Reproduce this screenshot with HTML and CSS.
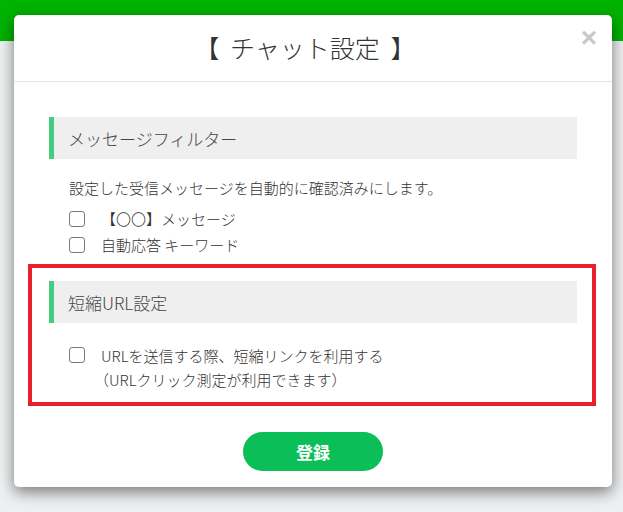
FILE: index.html
```html
<!DOCTYPE html>
<html lang="ja">
<head>
<meta charset="utf-8">
<title>チャット設定</title>
<link rel="stylesheet" href="styles.css">
</head>
<body>
<div class="page">
  <div class="topbar"></div>
</div>
<div class="modal">
  <div class="modal-header">
    <h1 class="modal-title">【 チャット設定 】</h1>
    <button class="close" type="button">×</button>
  </div>
  <div class="modal-body">
    <section class="section">
      <h2 class="section-title">メッセージフィルター</h2>
      <div class="section-content">
        <p class="desc">設定した受信メッセージを自動的に確認済みにします。</p>
        <ul class="checks">
          <li class="check-row"><input type="checkbox" class="cb"><span class="label">【〇〇】メッセージ</span></li>
          <li class="check-row"><input type="checkbox" class="cb"><span class="label">自動応答 キーワード</span></li>
        </ul>
      </div>
    </section>
    <section class="section highlight">
      <h2 class="section-title">短縮URL設定</h2>
      <div class="section-content url-content">
        <div class="check-row multi">
          <input type="checkbox" class="cb">
          <span class="label">URLを送信する際、短縮リンクを利用する<br><span class="note">（URLクリック測定が利用できます）</span></span>
        </div>
      </div>
    </section>
    <div class="actions">
      <button class="btn-submit" type="button">登録</button>
    </div>
  </div>
</div>
</body>
</html>
```

FILE: styles.css
```css
* { box-sizing: border-box; }
html, body { margin: 0; padding: 0; }
body {
  background: #eef0f1;
  font-family: "Noto Sans CJK JP", "Noto Sans", sans-serif;
  color: #333;
  width: 623px;
  height: 512px;
  overflow: hidden;
}
.page { height: 512px; }
.topbar { height: 41px; background: #00b300; }

.modal {
  position: absolute;
  left: 14px;
  top: 15px;
  width: 598px;
  background: #fff;
  border-radius: 5px;
  box-shadow: 0 5px 15px rgba(0,0,0,0.5);
}
.modal-header {
  position: relative;
  height: 67px;
  border-bottom: 1px solid #e5e5e5;
  display: flex;
  align-items: center;
  justify-content: center;
  padding-right: 16px;
}
.modal-title {
  margin: 0;
  font-size: 25px;
  font-weight: 300;
  color: #333;
  line-height: 32px;
  padding-bottom: 3px;
  word-spacing: 5px;
}
.close {
  position: absolute;
  right: 15px;
  top: 8px;
  border: 0;
  background: none;
  padding: 0;
  font-family: "Liberation Sans", Arial, sans-serif;
  font-size: 28px;
  font-weight: 700;
  line-height: 30px;
  color: #c8c8c8;
}

.modal-body { padding: 35px 0 16px; }
.section { margin: 0 35px; }
.section-title {
  margin: 0;
  height: 42px;
  background: #efefef;
  border-left: 5px solid #44cc80;
  padding-left: 14px;
  font-size: 17px;
  font-weight: 300;
  color: #444;
  display: flex;
  align-items: center;
}
.section-content { padding-left: 20px; }
.desc {
  margin: 17px 0 0;
  font-size: 15px;
  font-weight: 300;
  line-height: 24px;
}
.checks { list-style: none; margin: 6px 0 0; padding: 0; }
.check-row {
  display: flex;
  align-items: center;
  height: 26px;
  font-size: 15px;
  font-weight: 300;
}
.cb {
  appearance: none;
  -webkit-appearance: none;
  width: 16px;
  height: 16px;
  margin: 0 16px 0 0;
  border: 1px solid #7a7a7a;
  border-radius: 3px;
  background: #fff;
  flex: none;
}
.label { line-height: 24px; }

.highlight {
  margin: 6px 16px 0 14px;
  border: 4px solid #e8202a;
  padding: 13px 15px 10px 17px;
}
.url-content { padding-top: 21px; }
.check-row.multi { align-items: flex-start; height: auto; }
.check-row.multi .cb { margin-top: 3px; }
.note { margin-left: -7px; }

.actions { display: flex; justify-content: center; margin-top: 26px; }
.btn-submit {
  width: 140px;
  height: 39px;
  border: 0;
  border-radius: 20px;
  background: #0bbf58;
  color: #fff;
  font-family: "Noto Sans CJK JP", sans-serif;
  font-size: 17px;
  font-weight: 700;
  padding: 0;
}
```
